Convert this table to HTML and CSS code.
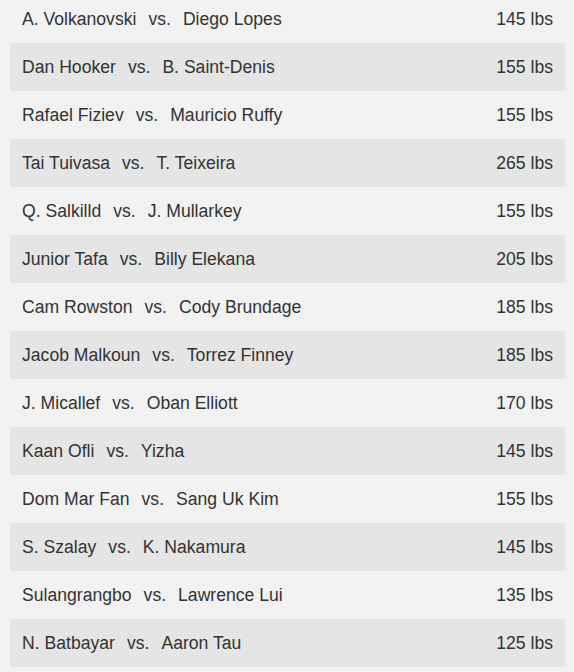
FILE: index.html
```html
<!DOCTYPE html>
<html>
<head>
<meta charset="utf-8">
<link rel="stylesheet" href="styles.css">
</head>
<body>
<div class="card">
  <div class="row"><span class="bout">A. Volkanovski<span class="vs">vs.</span>Diego Lopes</span><span class="wt">145 lbs</span></div>
  <div class="row"><span class="bout">Dan Hooker<span class="vs">vs.</span>B. Saint-Denis</span><span class="wt">155 lbs</span></div>
  <div class="row"><span class="bout">Rafael Fiziev<span class="vs">vs.</span>Mauricio Ruffy</span><span class="wt">155 lbs</span></div>
  <div class="row"><span class="bout">Tai Tuivasa<span class="vs">vs.</span>T. Teixeira</span><span class="wt">265 lbs</span></div>
  <div class="row"><span class="bout">Q. Salkilld<span class="vs">vs.</span>J. Mullarkey</span><span class="wt">155 lbs</span></div>
  <div class="row"><span class="bout">Junior Tafa<span class="vs">vs.</span>Billy Elekana</span><span class="wt">205 lbs</span></div>
  <div class="row"><span class="bout">Cam Rowston<span class="vs">vs.</span>Cody Brundage</span><span class="wt">185 lbs</span></div>
  <div class="row"><span class="bout">Jacob Malkoun<span class="vs">vs.</span>Torrez Finney</span><span class="wt">185 lbs</span></div>
  <div class="row"><span class="bout">J. Micallef<span class="vs">vs.</span>Oban Elliott</span><span class="wt">170 lbs</span></div>
  <div class="row"><span class="bout">Kaan Ofli<span class="vs">vs.</span>Yizha</span><span class="wt">145 lbs</span></div>
  <div class="row"><span class="bout">Dom Mar Fan<span class="vs">vs.</span>Sang Uk Kim</span><span class="wt">155 lbs</span></div>
  <div class="row"><span class="bout">S. Szalay<span class="vs">vs.</span>K. Nakamura</span><span class="wt">145 lbs</span></div>
  <div class="row"><span class="bout">Sulangrangbo<span class="vs">vs.</span>Lawrence Lui</span><span class="wt">135 lbs</span></div>
  <div class="row"><span class="bout">N. Batbayar<span class="vs">vs.</span>Aaron Tau</span><span class="wt">125 lbs</span></div>
</div>
</body>
</html>
```
FILE: styles.css
```css
html, body {
  margin: 0;
  padding: 0;
  background: #f2f2f2;
}
body {
  font-family: "Liberation Sans", Arial, sans-serif;
  font-size: 17.6px;
  color: #333333;
}
.card {
  display: flex;
  flex-direction: column;
  margin-top: -5px;
  padding: 0 9px 0 10px;
}
.row {
  display: flex;
  justify-content: space-between;
  align-items: center;
  height: 48px;
  padding: 0 12px 0 12px;
}
.row:nth-child(even) {
  background: #e5e5e5;
}
.vs {
  margin: 0 12px;
}
```
